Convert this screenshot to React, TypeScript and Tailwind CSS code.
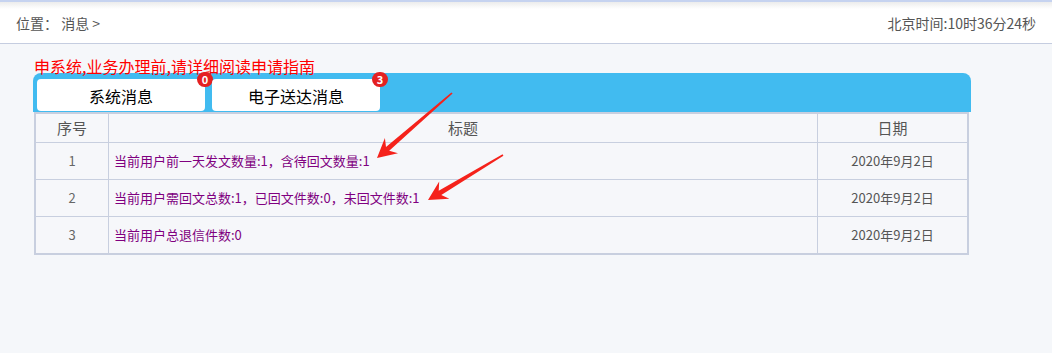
const rows = [
  { no: 1, title: "当前用户前一天发文数量:1，含待回文数量:1", date: "2020年9月2日" },
  { no: 2, title: "当前用户需回文总数:1，已回文件数:0，未回文件数:1", date: "2020年9月2日" },
  { no: 3, title: "当前用户总退信件数:0", date: "2020年9月2日" },
];

const tabs = [
  { label: "系统消息", count: 0 },
  { label: "电子送达消息", count: 3 },
];

export default function App() {
  return (
    <div
      className="relative w-[1052px] h-[353px] bg-[#f5f7fa] overflow-hidden"
      style={{ fontFamily: '"Noto Sans CJK SC", "Noto Sans", sans-serif' }}
    >
      {/* header */}
      <div className="h-[2px] bg-[#c6d3f0]" />
      <div className="h-[42px] flex items-center justify-between px-[16px] border-b border-[#c5cde0] bg-[linear-gradient(to_bottom,#ececec,#ffffff_7px)] text-[14px] text-[#555]">
        <div className="pt-[1px]">位置：&nbsp;消息 &gt;</div>
        <div className="pt-[1px]">北京时间:10时36分24秒</div>
      </div>

      <div className="pl-[33px] pt-[15px]">
        <div className="text-[16px] leading-[15px] h-[14px] text-[#ff0000] pl-[1px]">
          申系统,业务办理前,请详细阅读申请指南
        </div>

        {/* tab bar */}
        <div className="w-[938px] h-[39px] bg-[#41bbf0] rounded-t-[8px] flex gap-[7px] pl-[4px] pt-[6px]">
          {tabs.map((t) => (
            <div
              key={t.label}
              className="relative w-[168px] h-[32px] bg-white rounded-[4px] flex items-center justify-center pt-[1px] text-[16px] text-black"
            >
              {t.label}
              <span className="absolute right-[-8px] top-[-7px] w-[16px] h-[15px] rounded-full bg-[#e42121] text-white text-[11px] font-bold leading-[15px] text-center">
                {t.count}
              </span>
            </div>
          ))}
        </div>

        {/* table */}
        <div className="ml-[1px] w-[935px] border-2 border-[#c8cfdf] bg-[#f6f7fa] text-[13px]">
          <div className="flex h-[29px] border-b border-[#c8cfdf] text-[15px] text-[#555]">
            <div className="w-[73px] border-r border-[#c8cfdf] flex items-center justify-center">序号</div>
            <div className="w-[709px] border-r border-[#c8cfdf] flex items-center justify-center">标题</div>
            <div className="flex-1 flex items-center justify-center">日期</div>
          </div>
          {rows.map((r, i) => (
            <div
              key={r.no}
              className={
                i < rows.length - 1
                  ? "flex h-[37px] border-b border-[#c8cfdf]"
                  : "flex h-[36px]"
              }
            >
              <div className="w-[73px] border-r border-[#c8cfdf] flex items-center justify-center text-[#666]">
                {r.no}
              </div>
              <div className="w-[709px] border-r border-[#c8cfdf] flex items-center pl-[5px] text-[#800080]">
                {r.title}
              </div>
              <div className="flex-1 flex items-center justify-center text-[#555]">{r.date}</div>
            </div>
          ))}
        </div>
      </div>

      {/* annotation arrows */}
      <svg
        className="absolute left-0 top-0 pointer-events-none"
        width="1052"
        height="353"
        viewBox="0 0 1052 353"
      >
        <polygon
          fill="#f5221b"
          points="452.6,93.6 389.2,150.7 398,153.2 377,158 384.9,138 386,146.9 451.4,92.4"
        />
        <polygon
          fill="#f5221b"
          points="503.4,155.7 441.3,194.9 449.4,198.8 428,200 439.2,181.6 438.7,190.7 502.6,154.3"
        />
      </svg>
    </div>
  );
}
